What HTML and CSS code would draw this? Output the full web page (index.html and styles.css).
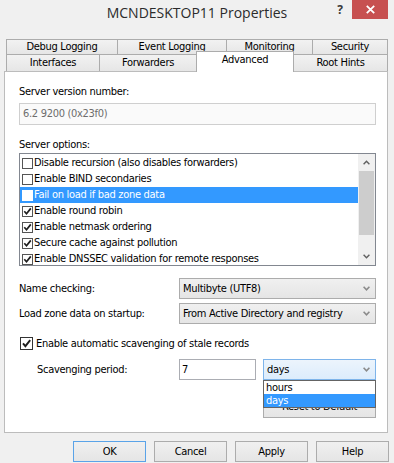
FILE: index.html
```html
<!DOCTYPE html>
<html>
<head>
<meta charset="utf-8">
<title>MCNDESKTOP11 Properties</title>
<link rel="stylesheet" href="styles.css">
</head>
<body>
<div class="window">
  <div class="titlebar">
    <span class="title">MCNDESKTOP11 Properties</span>
    <div class="caption">
      <span class="help">?</span>
      <span class="close"><svg width="9" height="9" viewBox="0 0 9 9"><path d="M0.8 0.8 L8.2 8.2 M8.2 0.8 L0.8 8.2" fill="none" stroke="#fff" stroke-width="1.8"/></svg></span>
    </div>
  </div>

  <div class="tabs">
    <div class="tabrow row1">
      <div class="tab t-debug">Debug Logging</div>
      <div class="tab t-event">Event Logging</div>
      <div class="tab t-monitor">Monitoring</div>
      <div class="tab t-security">Security</div>
    </div>
    <div class="tabrow row2">
      <div class="tab t-interfaces">Interfaces</div>
      <div class="tab t-forwarders">Forwarders</div>
      <div class="tab t-advanced active">Advanced</div>
      <div class="tab t-roothints">Root Hints</div>
    </div>
  </div>

  <div class="panel">
    <div class="label">Server version number:</div>
    <div class="readonly">6.2 9200 (0x23f0)</div>

    <div class="label options-label">Server options:</div>
    <div class="listbox">
      <div class="items">
        <div class="item"><span class="cb"></span>Disable recursion (also disables forwarders)</div>
        <div class="item"><span class="cb"></span>Enable BIND secondaries</div>
        <div class="item selected"><span class="cb"></span>Fail on load if bad zone data</div>
        <div class="item"><span class="cb"><svg width="9" height="9" viewBox="0 0 9 9"><path d="M1.3 4.3 L3.5 6.8 L7.8 1.4" fill="none" stroke="#1e1e1e" stroke-width="1.7"/></svg></span>Enable round robin</div>
        <div class="item"><span class="cb"><svg width="9" height="9" viewBox="0 0 9 9"><path d="M1.3 4.3 L3.5 6.8 L7.8 1.4" fill="none" stroke="#1e1e1e" stroke-width="1.7"/></svg></span>Enable netmask ordering</div>
        <div class="item"><span class="cb"><svg width="9" height="9" viewBox="0 0 9 9"><path d="M1.3 4.3 L3.5 6.8 L7.8 1.4" fill="none" stroke="#1e1e1e" stroke-width="1.7"/></svg></span>Secure cache against pollution</div>
        <div class="item"><span class="cb"><svg width="9" height="9" viewBox="0 0 9 9"><path d="M1.3 4.3 L3.5 6.8 L7.8 1.4" fill="none" stroke="#1e1e1e" stroke-width="1.7"/></svg></span>Enable DNSSEC validation for remote responses</div>
      </div>
      <div class="vscroll">
        <div class="sarrow"><svg width="7" height="5" viewBox="0 0 7 5"><path d="M0.6 4.2 L3.5 1.2 L6.4 4.2" fill="none" stroke="#606060" stroke-width="1.4"/></svg></div>
        <div class="strack"><div class="sthumb"></div></div>
        <div class="sarrow"><svg width="7" height="5" viewBox="0 0 7 5"><path d="M0.6 0.8 L3.5 3.8 L6.4 0.8" fill="none" stroke="#606060" stroke-width="1.4"/></svg></div>
      </div>
    </div>

    <div class="field-row first">
      <span class="flabel">Name checking:</span>
      <div class="select wide"><span>Multibyte (UTF8)</span><svg class="chev" width="7" height="5" viewBox="0 0 7 5"><path d="M0.6 0.8 L3.5 3.8 L6.4 0.8" fill="none" stroke="#8a8a8a" stroke-width="1.6"/></svg></div>
    </div>
    <div class="field-row second">
      <span class="flabel">Load zone data on startup:</span>
      <div class="select wide"><span>From Active Directory and registry</span><svg class="chev" width="7" height="5" viewBox="0 0 7 5"><path d="M0.6 0.8 L3.5 3.8 L6.4 0.8" fill="none" stroke="#8a8a8a" stroke-width="1.6"/></svg></div>
    </div>

    <div class="check-row">
      <span class="cb big"><svg width="11" height="11" viewBox="0 0 11 11"><path d="M2 5.3 L4.4 8.2 L9.2 2.2" fill="none" stroke="#1e1e1e" stroke-width="1.9"/></svg></span>
      <span>Enable automatic scavenging of stale records</span>
    </div>

    <div class="scav-row">
      <span class="flabel indent">Scavenging period:</span>
      <div class="textbox">7</div>
      <div class="combo">
        <div class="select hot"><span>days</span><svg class="chev" width="7" height="5" viewBox="0 0 7 5"><path d="M0.6 0.8 L3.5 3.8 L6.4 0.8" fill="none" stroke="#8a8a8a" stroke-width="1.6"/></svg></div>
        <div class="droplist">
          <div class="ditem">hours</div>
          <div class="ditem dsel">days</div>
        </div>
      </div>
    </div>

    <div class="reset-row">
      <div class="btn reset">Reset to Default</div>
    </div>
  </div>

  <div class="buttons">
    <div class="btn dlg default">OK</div>
    <div class="btn dlg">Cancel</div>
    <div class="btn dlg">Apply</div>
    <div class="btn dlg">Help</div>
  </div>
</div>
</body>
</html>
```
FILE: styles.css
```css
html, body {
  margin: 0;
  padding: 0;
}
body {
  width: 394px;
  height: 463px;
  overflow: hidden;
  background: #f0f0f0;
  font-family: "DejaVu Sans Condensed", "DejaVu Sans", sans-serif;
  font-size: 11px;
  letter-spacing: -0.3px;
  color: #000;
}
.window {
  width: 394px;
  height: 463px;
}

/* title bar */
.titlebar {
  position: relative;
  height: 30px;
  text-align: center;
}
.title {
  font-family: "Open Sans", sans-serif;
  font-size: 14px;
  letter-spacing: 0;
  line-height: 26px;
  color: #2b2b2b;
}
.caption {
  position: absolute;
  top: 0;
  right: 6px;
  display: flex;
  align-items: flex-start;
}
.help {
  font-family: "Open Sans", sans-serif;
  font-weight: bold;
  font-size: 12px;
  letter-spacing: 0;
  line-height: 19px;
  width: 14px;
  margin-right: 5px;
  color: #3a3a3a;
  text-align: center;
}
.close {
  width: 36px;
  height: 19px;
  background: #c75050;
  display: flex;
  align-items: center;
  justify-content: center;
}

/* tabs */
.tabs {
  margin: 9px 0 0 6px;
  width: 382px;
}
.tabrow {
  display: flex;
  align-items: flex-start;
}
.tab {
  box-sizing: border-box;
  border-left: 1px solid #acacac;
  border-top: 1px solid #acacac;
  background: linear-gradient(#f2f2f2, #e6e6e6);
  text-align: center;
  white-space: nowrap;
}
.tabrow .tab:last-child {
  border-right: 1px solid #acacac;
}
.row1 .tab {
  height: 15px;
  line-height: 14px;
}
.row2 .tab {
  height: 17px;
  line-height: 16px;
}
.t-debug { width: 111px; }
.t-event { width: 109px; }
.t-monitor { width: 86px; }
.t-security { width: 76px; }
.t-interfaces { width: 93px; }
.t-forwarders { width: 97px; }
.t-advanced { width: 98px; }
.t-roothints { width: 94px; }
.row2 .t-roothints { border-left: none; }
.row2 .tab.active {
  position: relative;
  z-index: 1;
  background: #fff;
  border-right: 1px solid #acacac;
  height: 21px;
  line-height: 16px;
  margin-top: -3px;
  margin-bottom: -1px;
}

/* panel */
.panel {
  box-sizing: border-box;
  margin-left: 4px;
  width: 384px;
  height: 362px;
  border: 1px solid #bcbcbc;
  background: #fff;
  padding: 13px 11px 0 14px;
}
.label {
  line-height: 14px;
  height: 14px;
}
.readonly {
  box-sizing: border-box;
  margin-top: 4px;
  height: 22px;
  border: 1px solid #cfcfcf;
  background: #fafafa;
  color: #6d6d6d;
  padding-left: 3px;
  line-height: 20px;
}
.options-label {
  margin-top: 13px;
}
.listbox {
  box-sizing: border-box;
  margin-top: 1px;
  height: 113px;
  border: 1px solid #828790;
  display: flex;
}
.items {
  flex: 1;
  overflow: hidden;
  padding-top: 1px;
}
.item {
  height: 16px;
  line-height: 16px;
  display: flex;
  align-items: center;
  padding-left: 2px;
  white-space: nowrap;
}
.item.selected {
  background: #3399ff;
  color: #fff;
}
.cb {
  box-sizing: border-box;
  width: 11px;
  height: 11px;
  border: 1px solid #555;
  background: #fff;
  margin-right: 1px;
  flex: none;
  display: flex;
  align-items: center;
  justify-content: center;
}
.item.selected .cb {
  border-color: #fff;
}
.vscroll {
  width: 17px;
  background: #f0f0f0;
  display: flex;
  flex-direction: column;
}
.sarrow {
  height: 17px;
  display: flex;
  align-items: center;
  justify-content: center;
}
.strack {
  flex: 1;
}
.sthumb {
  height: 64px;
  margin: 0 1px;
  background: #cdcdcd;
}

/* fields */
.field-row {
  display: flex;
  align-items: center;
  height: 21px;
}
.field-row.first {
  margin-top: 12px;
}
.field-row.second {
  margin-top: 4px;
}
.flabel {
  width: 160px;
  flex: none;
}
.flabel.indent {
  padding-left: 18px;
  box-sizing: border-box;
}
.select {
  box-sizing: border-box;
  height: 21px;
  border: 1px solid #acacac;
  background: linear-gradient(#f0f0f0, #e5e5e5);
  display: flex;
  align-items: center;
  justify-content: space-between;
  padding: 0 5px 0 3px;
  white-space: nowrap;
}
.select.wide {
  width: 197px;
}
.select.hot {
  border-color: #7eb4ea;
  background: linear-gradient(#ecf4fc, #dcecfc);
}
.chev {
  flex: none;
}

.check-row {
  margin-top: 12px;
  height: 14px;
  display: flex;
  align-items: center;
  padding-left: 1px;
}
.cb.big {
  width: 13px;
  height: 13px;
  border-color: #333;
  margin-right: 3px;
}

.scav-row {
  margin-top: 9px;
  display: flex;
  align-items: center;
  height: 21px;
}
.textbox {
  box-sizing: border-box;
  width: 77px;
  height: 21px;
  border: 1px solid #abadb3;
  background: #fff;
  padding-left: 2px;
  line-height: 19px;
}
.combo {
  position: relative;
  margin-left: 7px;
  width: 113px;
}
.droplist {
  position: absolute;
  top: 100%;
  left: 0;
  right: 0;
  z-index: 2;
  border: 1px solid #646464;
  background: #fff;
}
.ditem {
  height: 13px;
  line-height: 13px;
  padding-left: 2px;
}
.ditem.dsel {
  background: #3399ff;
  color: #fff;
}

.reset-row {
  margin-top: 15px;
  display: flex;
  justify-content: flex-end;
}
.btn {
  box-sizing: border-box;
  border: 1px solid #acacac;
  background: linear-gradient(#f0f0f0, #e5e5e5);
  text-align: center;
  white-space: nowrap;
}
.btn.reset {
  width: 113px;
  height: 23px;
  line-height: 21px;
}

/* dialog buttons */
.buttons {
  margin-top: 8px;
  display: flex;
  justify-content: flex-end;
  gap: 8px;
  padding-right: 5px;
}
.btn.dlg {
  width: 73px;
  height: 21px;
  line-height: 19px;
}
.btn.default {
  border-color: #5aa3e8;
}
```
